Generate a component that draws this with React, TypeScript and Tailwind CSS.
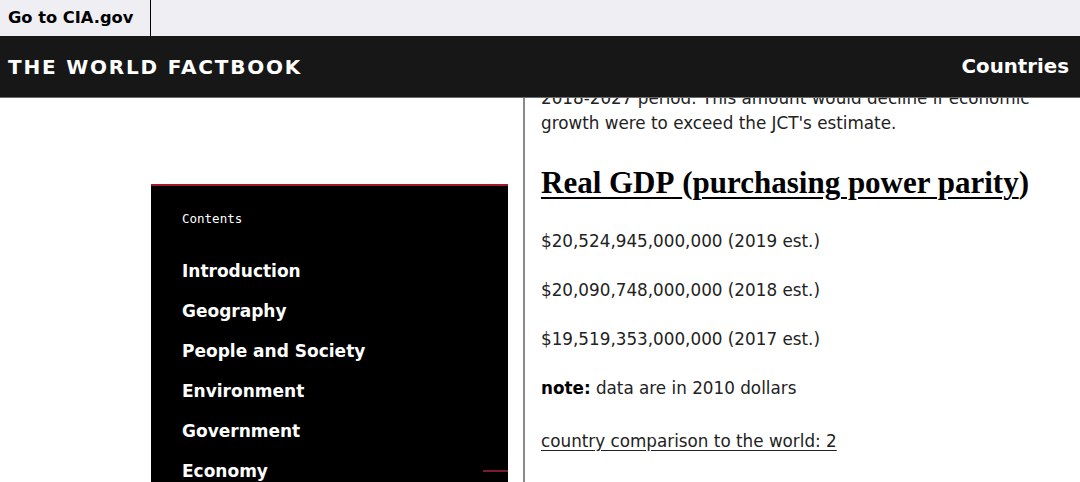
import React from "react";

const nav = [
  "Introduction",
  "Geography",
  "People and Society",
  "Environment",
  "Government",
  "Economy",
];

export default function App() {
  return (
    <div className="w-[1080px] h-[482px] overflow-hidden bg-white flex flex-col" style={{ fontFamily: '"DejaVu Sans", sans-serif' }}>
      {/* top utility bar */}
      <div className="h-[36px] bg-[#efeef3] flex shrink-0">
        <div className="w-[151px] border-r border-black flex items-center pl-[8px] text-[16.3px] font-bold text-black">
          Go to CIA.gov
        </div>
      </div>
      {/* main header */}
      <div className="h-[62px] bg-[#171717] border-b border-[#6b6b6b] flex items-center justify-between pl-[8px] pr-[11px] shrink-0">
        <div className="text-white font-bold text-[20px] tracking-[1.8px]">THE WORLD FACTBOOK</div>
        <div className="text-white font-bold text-[19.8px]">Countries</div>
      </div>
      {/* body */}
      <div className="flex flex-1 min-h-0">
        <div className="w-[523px] shrink-0 pt-[86px] pl-[151px]">
          <div className="w-[357px] h-[400px] bg-black border-t-2 border-[#a3192d] pt-[25px] pl-[31px]">
            <div className="h-[16px] leading-[16px] text-[12.5px] text-white" style={{ fontFamily: '"DejaVu Sans Mono", monospace' }}>
              Contents
            </div>
            <div className="mt-[25px] flex flex-col">
              {nav.map((n) => (
                <div key={n} className="h-[40px] flex items-center justify-between text-white font-bold text-[17px]">
                  <span>{n}</span>
                  {n === "Economy" && <span className="w-[25px] h-[2px] bg-[#7b1b2c] -mt-[2px]" />}
                </div>
              ))}
            </div>
          </div>
        </div>
        <div className="w-[2px] bg-[#8a8a8a] shrink-0" />
        <div className="flex-1 min-w-0 overflow-hidden pl-[16px] pr-[4px] text-[#222222] text-[16.8px]">
          <p className="leading-[25px] -mt-[12.5px]">
            2018-2027 period. This amount would decline if economic growth were to exceed the JCT's estimate.
          </p>
          <h2
            className="mt-[28.5px] leading-[38px] text-[31px] font-bold text-black"
            style={{ fontFamily: '"Liberation Serif", serif' }}
          >
            <span className="underline decoration-2 underline-offset-[4px]">Real GDP&nbsp;</span>(
            <span className="underline decoration-2 underline-offset-[4px]">purchasing power parity</span>)
          </h2>
          <p className="leading-[25px] mt-[26.5px]">$20,524,945,000,000 (2019 est.)</p>
          <p className="leading-[25px] mt-[24px]">$20,090,748,000,000 (2018 est.)</p>
          <p className="leading-[25px] mt-[24px]">$19,519,353,000,000 (2017 est.)</p>
          <p className="leading-[25px] mt-[24px]">
            <span className="font-bold text-black">note:</span> data are in 2010 dollars
          </p>
          <p className="leading-[25px] mt-[28px]">
            <span className="underline underline-offset-[3px]">country comparison to the world: 2</span>
          </p>
        </div>
      </div>
    </div>
  );
}
